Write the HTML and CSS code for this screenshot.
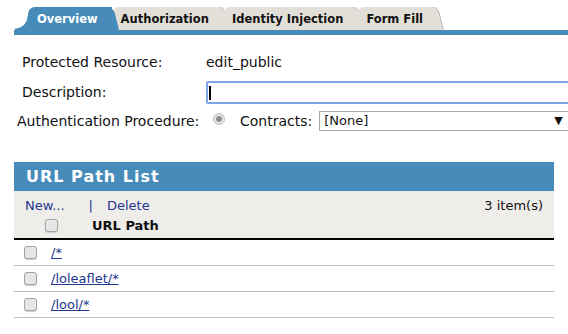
FILE: index.html
```html
<!DOCTYPE html>
<html lang="en">

<head>
    <meta charset="UTF-8">
    <meta name="viewport" content="width=device-width, initial-scale=1.0">
    <title>Protected Resource</title>
    <link rel="stylesheet" href="styles.css">
</head>

<body>
    <div class="tabs">
        <div class="tab active">Overview</div>
        <div class="tab">Authorization</div>
        <div class="tab">Identity Injection</div>
        <div class="tab">Form Fill</div>
    </div>
    <div class="tabBar"></div>

    <div class="form">
        <div class="row">
            <span class="label">Protected Resource:</span>
            <span>edit_public</span>
        </div>
        <div class="row">
            <span class="label">Description:</span>
            <div class="field"><span class="caret"></span></div>
        </div>
        <div class="row auth">
            <span class="label">Authentication Procedure:</span>
            <span class="radio"></span>
            <span class="contracts">Contracts:</span>
            <div class="select">[None]<span class="arrow">&#9660;</span></div>
        </div>
    </div>

    <div class="panel">
        <div class="panelHead">URL Path List</div>
        <div class="toolbar">
            <div class="actions">
                <a class="action" href="#">New...</a>
                <span class="sep">|</span>
                <a class="action" href="#">Delete</a>
                <span class="count">3 item(s)</span>
            </div>
            <div class="colHead">
                <span class="check"></span>
                <span>URL Path</span>
            </div>
        </div>
        <div class="item"><span class="check"></span><a href="#">/*</a></div>
        <div class="item"><span class="check"></span><a href="#">/loleaflet/*</a></div>
        <div class="item"><span class="check"></span><a href="#">/lool/*</a></div>
    </div>
</body>

</html>
```

FILE: styles.css
```css
* {
    box-sizing: border-box;
}

body {
    margin: 0;
    font-family: "DejaVu Sans", Verdana, sans-serif;
    font-size: 13px;
    color: #111;
    overflow: hidden;
}

/* tabs */
.tabs {
    display: flex;
    margin: 7px 0 0 28px;
    height: 23px;
}

.tab {
    position: relative;
    z-index: 1;
    height: 23px;
    line-height: 24px;
    padding: 0 14px 0 9px;
    background: #e2dfd9;
    border-radius: 7px 0 0 0;
    font-weight: bold;
    font-size: 11.5px;
    color: #111;
}

.tab::after {
    content: "";
    position: absolute;
    top: 0;
    bottom: 0;
    right: -7px;
    width: 14px;
    background: inherit;
    border-right: 1px solid #a9a6a0;
    border-radius: 0 6px 0 0;
    transform: skewX(14deg);
    transform-origin: bottom;
}

.active {
    background: #478bba;
    color: #fff;
    z-index: 2;
}

.active::after {
    border-right: none;
}

.active::before {
    content: "";
    position: absolute;
    left: -13px;
    bottom: 0;
    width: 14px;
    height: 14px;
    background: radial-gradient(circle at 0 0, transparent 12px, #478bba 13px);
}

.tabBar {
    height: 5px;
    margin: 0 0 0 14px;
    background: #478bba;
}

/* form */
.form {
    padding: 12px 0 0 22px;
    font-size: 14px;
}

.row {
    display: flex;
    align-items: center;
    height: 30px;
}

.label {
    width: 184px;
    flex: none;
}

.field {
    flex: none;
    width: 380px;
    height: 23px;
    border: 2px solid #7ea6e6;
    border-radius: 2px;
    padding: 3px 0 0 1px;
}

.caret {
    display: block;
    width: 2px;
    height: 14px;
    background: #000;
}

.auth {
    margin-left: -5px;
    height: 27px;
}

.auth .label {
    width: 196px;
}

.radio {
    flex: none;
    width: 12px;
    height: 12px;
    border-radius: 50%;
    border: 1px solid #bdbdbd;
    background: radial-gradient(circle, #8e8e8e 2.5px, #e4e4e4 3.5px);
    margin-top: -3px;
}

.contracts {
    flex: none;
    margin-left: 15px;
}

.select {
    flex: none;
    width: 260px;
    height: 20px;
    margin-left: 7px;
    border: 1px solid #a9a9a9;
    padding: 0 0 0 4px;
    line-height: 18px;
    font-size: 13px;
    position: relative;
}

.arrow {
    position: absolute;
    left: 234px;
    top: 0;
    font-size: 11px;
}

/* list panel */
.panel {
    width: 540px;
    margin: 28px 0 0 14px;
}

.panelHead {
    height: 29px;
    line-height: 29px;
    padding-left: 12px;
    background: #478bba;
    color: #fff;
    font-weight: bold;
    font-size: 16px;
    letter-spacing: 1px;
}

.toolbar {
    background: #efedea;
    border-bottom: 2px solid #000;
    padding: 6px 11px 0 11px;
    height: 49px;
}

.actions {
    display: flex;
    align-items: center;
    height: 16px;
}

.action {
    color: #24378f;
    text-decoration: none;
}

.sep {
    margin: 0 14px 0 24px;
    color: #24378f;
}

.count {
    margin-left: auto;
}

.colHead {
    display: flex;
    align-items: center;
    margin-top: 5px;
    padding-left: 20px;
    font-weight: bold;
}

.colHead .check {
    margin-right: 34px;
}

.check {
    display: inline-block;
    width: 13px;
    height: 13px;
    border: 1px solid #a3a3a3;
    border-radius: 3px;
    background: #e6e6e6;
    box-shadow: 0 1px 1px #ccc;
}

.item {
    display: flex;
    align-items: center;
    height: 26px;
    padding-left: 10px;
    border-bottom: 1px solid #bdbdbd;
}

.item .check {
    margin-right: 14px;
}

.item a {
    color: #24378f;
}
```
